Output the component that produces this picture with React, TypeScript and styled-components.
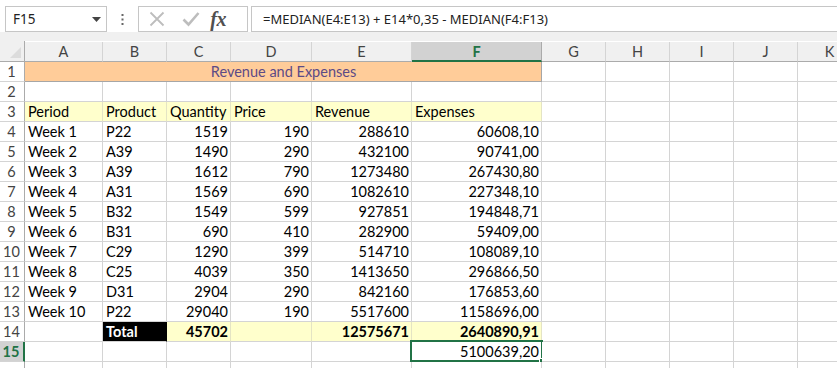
import React from 'react';
import styled, { createGlobalStyle } from 'styled-components';

const GlobalStyle = createGlobalStyle`
  html, body { margin: 0; padding: 0; background: #ffffff; }
  body { width: 837px; height: 368px; overflow: hidden; }
  * { box-sizing: border-box; }
`;

const Window = styled.div`
  width: 837px;
  height: 368px;
  overflow: hidden;
  background: #ffffff;
  display: flex;
  flex-direction: column;
`;

const FormulaBar = styled.div`
  flex: none;
  height: 32px;
  display: flex;
  align-items: flex-start;
  padding: 6px 0 0 5px;
  background: #ffffff;
  font-family: 'Noto Sans', sans-serif;
  font-size: 13px;
  color: #222;
`;

const NameBox = styled.div`
  width: 102px;
  height: 26px;
  border: 1px solid #c6c6c6;
  background: #fff;
  display: flex;
  align-items: center;
  justify-content: space-between;
  padding: 0 5px 0 7px;
  font-size: 13.5px;
`;

const DotsWrap = styled.div`
  width: 31px;
  height: 26px;
  display: flex;
  align-items: center;
  justify-content: center;
`;

const IconBox = styled.div`
  width: 110px;
  height: 26px;
  border: 1px solid #c6c6c6;
  display: flex;
  align-items: center;
  padding: 0 0 0 10px;
`;

const IconSlot = styled.div`
  width: 40px;
  height: 24px;
  display: flex;
  align-items: center;
  justify-content: flex-start;
`;

const Fx = styled.span`
  font-family: 'Liberation Serif', 'DejaVu Serif', serif;
  font-style: italic;
  font-weight: bold;
  font-size: 20px;
  color: #505050;
  letter-spacing: -0.5px;
  margin-left: -4px;
`;

const FormulaInput = styled.div`
  margin-left: 3px;
  flex: 1;
  height: 26px;
  margin-right: -4px;
  border: 1px solid #c6c6c6;
  display: flex;
  align-items: center;
  padding-left: 11px;
  white-space: nowrap;
`;

const Gap = styled.div`
  flex: none;
  height: 9px;
  background: #f0f0f0;
`;

const Sheet = styled.div`
  display: grid;
  grid-template-columns: 25px 78px 64px 64px 81px 100px 130px repeat(5, 64px);
  grid-template-rows: 21px;
  grid-auto-rows: 20px;
  font-family: Lato, 'Open Sans', sans-serif;
  font-size: 14.5px;
  color: #000;
`;

const Corner = styled.div`
  background: #f0f0f0;
  border-right: 1px solid #ababab;
  border-bottom: 1px solid #ababab;
  display: flex;
  align-items: flex-end;
  justify-content: flex-end;
  padding: 0 3px 3px 0;
`;

const ColHead = styled.div<{ $sel?: boolean }>`
  background: ${(p) => (p.$sel ? '#d2d2d2' : '#f0f0f0')};
  border-right: 1px solid ${(p) => (p.$sel ? '#ababab' : '#d4d4d4')};
  border-bottom: ${(p) => (p.$sel ? '2px solid #217346' : '1px solid #ababab')};
  display: flex;
  align-items: center;
  justify-content: center;
  color: ${(p) => (p.$sel ? '#217346' : '#444')};
  font-weight: ${(p) => (p.$sel ? 700 : 400)};
  margin-top: 1px;
`;

const RowHead = styled.div<{ $sel?: boolean }>`
  background: ${(p) => (p.$sel ? '#d2d2d2' : '#ffffff')};
  border-right: ${(p) => (p.$sel ? '2px solid #217346' : '1px solid #ababab')};
  border-bottom: 1px solid #d4d4d4;
  display: flex;
  align-items: center;
  justify-content: center;
  color: ${(p) => (p.$sel ? '#217346' : '#444')};
  font-weight: ${(p) => (p.$sel ? 700 : 400)};
  padding-right: 1px;
`;

type Tone = 'plain' | 'title' | 'head' | 'total' | 'dark';

const toneBg: Record<Tone, string> = {
  plain: '#ffffff',
  title: '#ffcc99',
  head: '#ffffcc',
  total: '#ffffcc',
  dark: '#000000',
};

const toneLine: Record<Tone, string> = {
  plain: '#d4d4d4',
  title: '#a6a6a6',
  head: '#e4e4c4',
  total: '#e4e4c4',
  dark: '#000000',
};

const Cell = styled.div<{ $tone: Tone; $align?: 'left' | 'right' | 'center'; $span?: number }>`
  position: relative;
  grid-column: span ${(p) => p.$span ?? 1};
  background: ${(p) => toneBg[p.$tone]};
  border-right: 1px solid ${(p) => toneLine[p.$tone]};
  border-bottom: 1px solid ${(p) => (p.$tone === 'title' ? '#a6a6a6' : '#d4d4d4')};
  display: flex;
  align-items: center;
  justify-content: ${(p) =>
    p.$align === 'right' ? 'flex-end' : p.$align === 'center' ? 'center' : 'flex-start'};
  padding: 0 2px 0 3px;
  white-space: nowrap;
  color: ${(p) => (p.$tone === 'dark' ? '#ffffff' : p.$tone === 'title' ? '#5c4a86' : '#000')};
  font-weight: ${(p) => (p.$tone === 'total' || p.$tone === 'dark' ? 700 : 400)};
`;

const Selection = styled.div`
  position: absolute;
  left: -2px;
  top: -2px;
  right: -2px;
  bottom: -1px;
  border: 2px solid #217346;
  pointer-events: none;
`;

const Handle = styled.div`
  position: absolute;
  right: -4px;
  bottom: -4px;
  width: 6px;
  height: 6px;
  background: #217346;
  border: 1px solid #fff;
`;

const CellText = styled.span`
  position: relative;
  z-index: 1;
`;

const cols = ['A', 'B', 'C', 'D', 'E', 'F', 'G', 'H', 'I', 'J', 'K'];

const data: [string, string, string, string, string, string][] = [
  ['Week 1', 'P22', '1519', '190', '288610', '60608,10'],
  ['Week 2', 'A39', '1490', '290', '432100', '90741,00'],
  ['Week 3', 'A39', '1612', '790', '1273480', '267430,80'],
  ['Week 4', 'A31', '1569', '690', '1082610', '227348,10'],
  ['Week 5', 'B32', '1549', '599', '927851', '194848,71'],
  ['Week 6', 'B31', '690', '410', '282900', '59409,00'],
  ['Week 7', 'C29', '1290', '399', '514710', '108089,10'],
  ['Week 8', 'C25', '4039', '350', '1413650', '296866,50'],
  ['Week 9', 'D31', '2904', '290', '842160', '176853,60'],
  ['Week 10', 'P22', '29040', '190', '5517600', '1158696,00'],
];

const Empty = ({ n }: { n: number }) => (
  <>
    {Array.from({ length: n }).map((_, i) => (
      <Cell key={i} $tone="plain" />
    ))}
  </>
);

export default function App() {
  return (
    <Window>
      <GlobalStyle />
      <FormulaBar>
        <NameBox>
          <span>F15</span>
          <svg width="9" height="5" viewBox="0 0 9 5">
            <path d="M0 0 L9 0 L4.5 5 Z" fill="#444" />
          </svg>
        </NameBox>
        <DotsWrap>
          <svg width="3" height="11" viewBox="0 0 3 11">
            <rect x="0.5" y="0" width="2" height="2" fill="#666" />
            <rect x="0.5" y="4.5" width="2" height="2" fill="#666" />
            <rect x="0.5" y="9" width="2" height="2" fill="#666" />
          </svg>
        </DotsWrap>
        <IconBox>
          <IconSlot>
            <svg width="16" height="16" viewBox="0 0 16 16">
              <path d="M1.5 1.5 L14.5 14.5 M14.5 1.5 L1.5 14.5" stroke="#bdbdbd" strokeWidth="1.8" fill="none" />
            </svg>
          </IconSlot>
          <IconSlot>
            <svg width="18" height="16" viewBox="0 0 18 16">
              <path d="M1.5 8.5 L6.5 13.5 L16.5 2" stroke="#bdbdbd" strokeWidth="2.6" fill="none" />
            </svg>
          </IconSlot>
          <IconSlot>
            <Fx>fx</Fx>
          </IconSlot>
        </IconBox>
        <FormulaInput>=MEDIAN(E4:E13) + E14*0,35 - MEDIAN(F4:F13)</FormulaInput>
      </FormulaBar>
      <Gap />
      <Sheet>
        <Corner>
          <svg width="11" height="11" viewBox="0 0 11 11">
            <path d="M11 0 L11 11 L0 11 Z" fill="#dcdcdc" />
          </svg>
        </Corner>
        {cols.map((c) => (
          <ColHead key={c} $sel={c === 'F'}>
            {c}
          </ColHead>
        ))}

        <RowHead>1</RowHead>
        <Cell $tone="title" $span={6} $align="center">
          Revenue and Expenses
        </Cell>
        <Empty n={5} />

        <RowHead>2</RowHead>
        <Empty n={11} />

        <RowHead>3</RowHead>
        {['Period', 'Product', 'Quantity', 'Price', 'Revenue', 'Expenses'].map((h) => (
          <Cell key={h} $tone="head">
            {h}
          </Cell>
        ))}
        <Empty n={5} />

        {data.map((r, i) => (
          <React.Fragment key={i}>
            <RowHead>{i + 4}</RowHead>
            <Cell $tone="plain">{r[0]}</Cell>
            <Cell $tone="plain">{r[1]}</Cell>
            <Cell $tone="plain" $align="right">{r[2]}</Cell>
            <Cell $tone="plain" $align="right">{r[3]}</Cell>
            <Cell $tone="plain" $align="right">{r[4]}</Cell>
            <Cell $tone="plain" $align="right">{r[5]}</Cell>
            <Empty n={5} />
          </React.Fragment>
        ))}

        <RowHead>14</RowHead>
        <Cell $tone="plain" />
        <Cell $tone="dark">Total</Cell>
        <Cell $tone="total" $align="right">45702</Cell>
        <Cell $tone="total" />
        <Cell $tone="total" $align="right">12575671</Cell>
        <Cell $tone="total" $align="right">2640890,91</Cell>
        <Empty n={5} />

        <RowHead $sel>15</RowHead>
        <Empty n={5} />
        <Cell $tone="plain" $align="right">
          <CellText>5100639,20</CellText>
          <Selection>
            <Handle />
          </Selection>
        </Cell>
        <Empty n={5} />

        <RowHead />
        <Empty n={11} />
      </Sheet>
    </Window>
  );
}
